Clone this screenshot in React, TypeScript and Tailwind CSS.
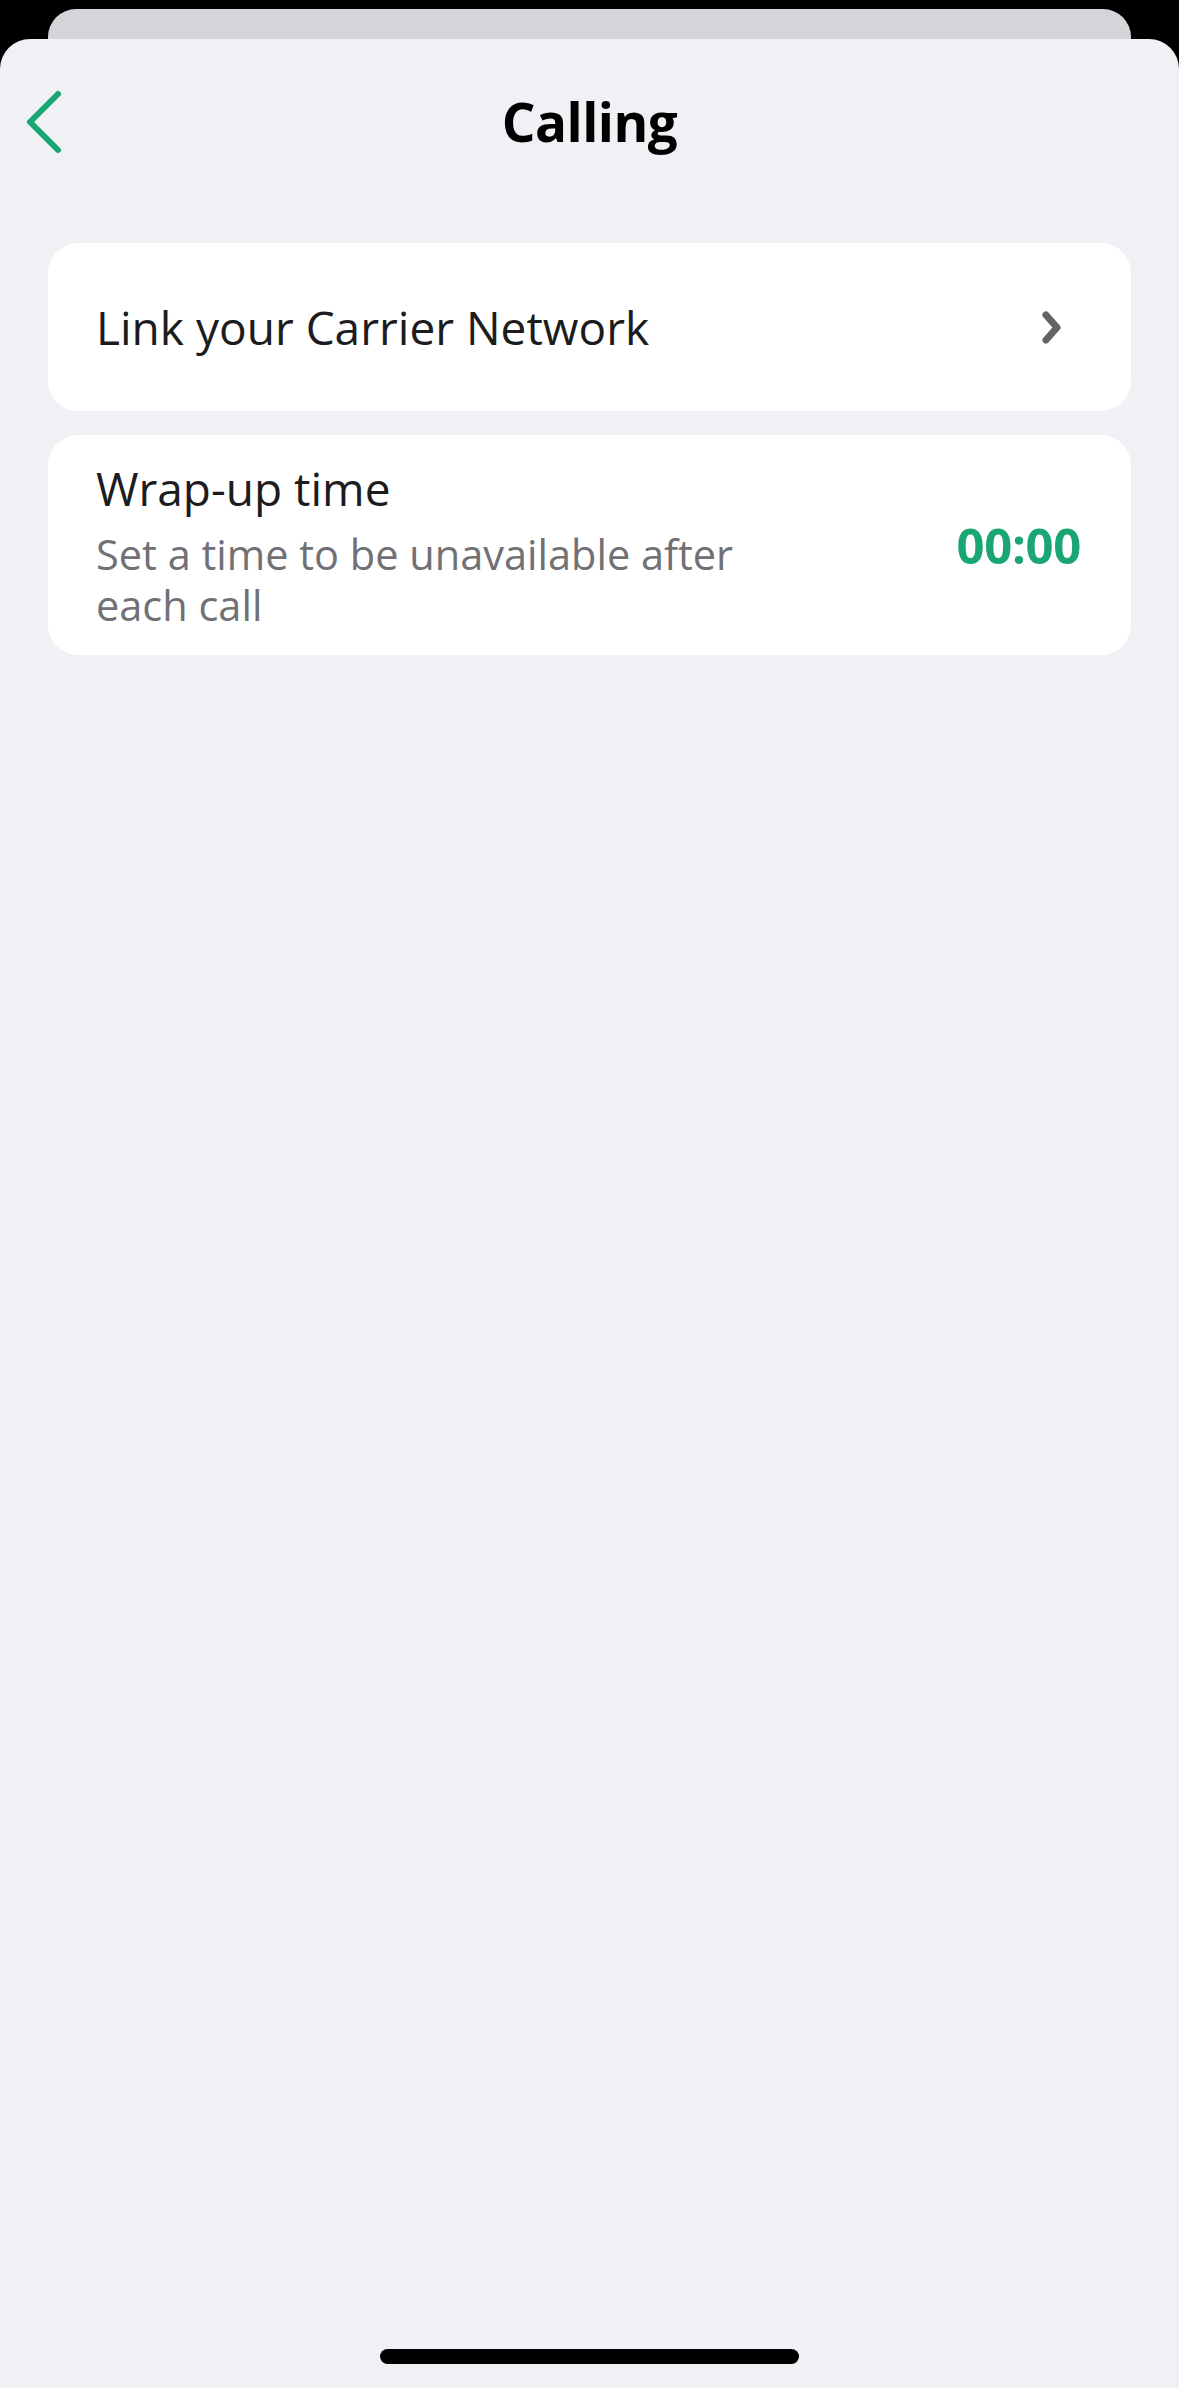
const font = { fontFamily: '"Open Sans", "Liberation Sans", sans-serif' };

const BackChevron = () => (
  <svg width="40" height="64" viewBox="0 0 40 64" fill="none">
    <path
      d="M34 4 L6 32 L34 60"
      stroke="#1aa672"
      strokeWidth="6"
      strokeLinecap="round"
      strokeLinejoin="round"
    />
  </svg>
);

const SettingsChevron = () => (
  <svg width="22" height="33" viewBox="0 0 22 33" fill="none">
    <path
      d="M5 4 L16 16.5 L5 29"
      stroke="#636366"
      strokeWidth="7"
      strokeLinecap="round"
      strokeLinejoin="round"
    />
  </svg>
);

export default function App() {
  return (
    <div className="min-h-[2388px] w-[1179px] bg-black flex flex-col" style={font}>
      {/* card peeking behind the sheet */}
      <div className="mx-[48px] mt-[9px] h-[30px] rounded-t-[28px] bg-[#d4d5d9]" />

      {/* Sheet */}
      <div className="flex-1 flex flex-col rounded-t-[30px] bg-[#f0f1f5]">
        <header className="relative h-[166px] flex items-center justify-center">
          <button className="absolute left-[24px] top-[51px]">
            <BackChevron />
          </button>
          <h1 className="text-[53px] font-bold text-black tracking-[-0.5px]">Calling</h1>
        </header>

        <div className="mx-[48px] mt-[38px] flex flex-col gap-[24px]">
          <div className="h-[168px] rounded-[30px] bg-white pl-[48px] pr-[68px] flex items-center justify-between">
            <span className="text-[46px] text-[#1c1c1e]">Link your Carrier Network</span>
            <SettingsChevron />
          </div>

          <div className="rounded-[30px] bg-white pl-[48px] pr-[50px] pt-[25px] pb-[24px] flex items-center justify-between">
            <div className="flex flex-col">
              <span className="text-[46px] leading-[56px] text-[#1c1c1e]">Wrap-up time</span>
              <span className="mt-[13px] w-[680px] text-[41.5px] leading-[51px] text-[#707075]">
                Set a time to be unavailable after each call
              </span>
            </div>
            <span className="text-[49px] font-bold text-[#1aa672] tracking-[-0.3px]">00:00</span>
          </div>
        </div>

        <div className="mt-auto mb-[24px] mx-auto h-[15px] w-[419px] rounded-full bg-black" />
      </div>
    </div>
  );
}
